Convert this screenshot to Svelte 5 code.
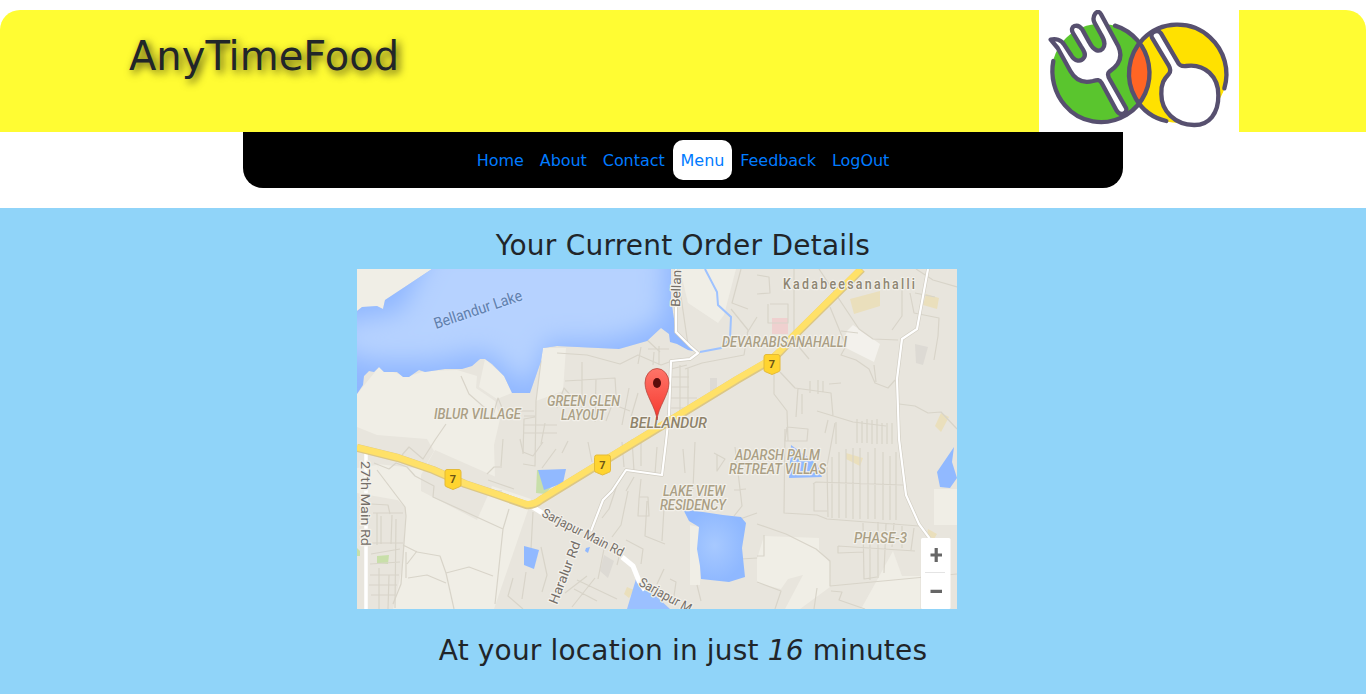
<script>
  const links = ['Home', 'About', 'Contact', 'Menu', 'Feedback', 'LogOut'];
  const active = 'Menu';
  const minutes = 16;

  const shields = [
    { x: 96, y: 210 },
    { x: 245.5, y: 195.5 },
    { x: 415, y: 95 }
  ];

  // Map captions: x, baseline, drawn width, size, rotation
  const labels = [
    { t: 'Bellandur Lake', x: 79, y: 60, w: 92, s: 15.5, r: -18.5, c: 'water' },
    { t: 'IBLUR VILLAGE', x: 77, y: 149.5, w: 87, s: 14.5, r: 0, c: 'area' },
    { t: 'GREEN GLEN', x: 190, y: 136.5, w: 73, s: 14.5, r: 0, c: 'area' },
    { t: 'LAYOUT', x: 204, y: 151, w: 45, s: 14.5, r: 0, c: 'area' },
    { t: 'BELLANDUR', x: 273, y: 159, w: 77, s: 15, r: 0, c: 'area dark' },
    { t: 'DEVARABISANAHALLI', x: 365, y: 77.5, w: 125, s: 14.5, r: 0, c: 'area' },
    { t: 'ADARSH PALM', x: 378, y: 190.5, w: 85, s: 14.5, r: 0, c: 'area' },
    { t: 'RETREAT VILLAS', x: 372, y: 204.5, w: 97, s: 14.5, r: 0, c: 'area' },
    { t: 'LAKE VIEW', x: 306, y: 227, w: 62, s: 14.5, r: 0, c: 'area' },
    { t: 'RESIDENCY', x: 303, y: 241, w: 66, s: 14.5, r: 0, c: 'area' },
    { t: 'PHASE-3', x: 497, y: 273.5, w: 53, s: 14.5, r: 0, c: 'area' },
    { t: '27th Main Rd', x: 4, y: 192, w: 85, s: 13, r: 90, c: 'street' },
    { t: 'Sarjapur Main Rd', x: 184, y: 247, w: 90, s: 13, r: 27, c: 'street' },
    { t: 'Sarjapur M', x: 281, y: 316, w: 58, s: 13, r: 29, c: 'street' },
    { t: 'Haralur Rd', x: 200, y: 336, w: 66, s: 13, r: -69, c: 'street' },
    { t: 'Bellan', x: 323, y: 38, w: 37, s: 13, r: -88, c: 'street' }
  ];
</script>

<header>
  <h1>AnyTimeFood</h1>
  <svg class="logo" viewBox="27 30 600 366" aria-label="AnyTimeFood logo">
    <rect x="27" y="30" width="600" height="366" fill="#fff" />
    <circle cx="212" cy="218" r="147" fill="#5ac52e" />
    <circle cx="443" cy="221" r="147" fill="#ffe100" />
    <path d="M327 137C286 180 287 267 327 311C370 266 372 182 327 137Z" fill="#ff6524" />
    <g fill="none" stroke="#57506f" stroke-width="13" stroke-linecap="round" stroke-linejoin="round">
      <path d="M255 77C309 94 347 140 356 192C367 254 340 313 289 345C223 384 148 367 105 316C73 279 61 228 70 183" />
      <path d="M583 265C599 211 584 152 540 112C483 59 393 62 339 117C292 165 284 240 317 295C338 332 370 354 409 363" />
      <path fill="#fff" d="M62 119C76 115 94 119 102 133L123 165C134 185 153 187 162 173C169 162 161 151 153 139L129 99C117 78 143 68 157 89L178 127C191 153 207 157 218 146C229 133 222 118 214 105L193 67C185 50 202 22 213 43L265 139C280 172 267 196 238 215C231 221 234 231 242 243L288 324C294 339 272 351 260 332L215 249C209 238 202 239 189 243C158 251 136 240 121 213L83 144Z" />
      <path fill="#fff" d="M366 113C358 99 381 85 393 100L442 184C447 196 453 199 467 198C525 189 566 231 565 286C566 340 537 376 492 375C435 374 394 334 394 282C393 251 402 237 417 221C424 213 421 205 416 196Z" />
    </g>
  </svg>
</header>

<nav>
  {#each links as link}
    <a href="#{link}" class:active={link === active}><span>{link}</span></a>
  {/each}
</nav>

<main>
  <h3>Your Current Order Details</h3>
  <svg class="map" viewBox="0 0 600 340" width="600" height="340">
    <defs>
      <radialGradient id="pond"><stop offset="0" stop-color="#a7c9ff" /><stop offset="1" stop-color="#8fb8ff" /></radialGradient>
      <linearGradient id="pin" x2="0" y2="1"><stop stop-color="#ff7468" /><stop offset="1" stop-color="#f5382e" /></linearGradient>
      <filter id="soft" x="-20%" y="-40%" width="140%" height="180%"><feGaussianBlur stdDeviation="12" /></filter>
      <clipPath id="shore"><path d="M75 0L28 31L26 40L20 37L5 38L0 42V125L6 116L7 107L12 102L17 103L22 98L27 103H40L46 108H52L62 101L68 103L88 100H105L115 97L123 90H128L135 95L147 107L155 124H173L184 92L186 79L200 77L262 80L290 72L304 59L312 65L313 73L320 75L331 81L340 83L337 80L319 63L314 30V0Z" /></clipPath>
    </defs>
    <rect width="600" height="340" fill="#e8e5dd" />

    <!-- Open land -->
    <g fill="#f0eee6">
      <path d="M0 0H75L28 31L26 40L0 42Z" />
      <path d="M0 125L22 98L50 108L68 102L100 101L120 107L119 119L138 132L143 150L137 176L138 210L120 240L68 221L63 206L77 182L70 170L20 166L0 158Z" />
      <path d="M128 90L147 107L155 124L140 130L122 118Z" />
      <path d="M185 79H209L206 122L179 132Z" />
      <path d="M323 0H379L367 46L361 54L331 34Z" />
      <path d="M20 195L67 200L120 240L172 238L137 340H36L46 295L49 239L35 225Z" />
      <path d="M68 195L138 218L174 230L163 260L136 250L67 224Z" />
      <path d="M407 267L462 269V281L473 294V318L443 340H428L446 306L431 310L424 320L400 314V290Z" />
      <path d="M0 199L20 196L46 232L0 224Z" />
      <path d="M577 220H600V256H577Z" />
      <path d="M536 282L545 307H563V340H504L519 313Z" />
      <path d="M333 256L342 258L344 280L343 316H333Z" />
    </g>
    <path d="M64 206L78 181L139 208L120 251L64 222Z" fill="#e8e5dd" />
    <path d="M496 56L523 75L517 93L485 77L490 62Z" fill="#f3f1ec" />
    <g fill="#eadfbc">
      <path d="M493 30L523 22V37L497 45Z" /><path d="M569 25L582 29L580 40L566 36Z" />
      <path d="M584 144L592 148L584 163L578 157Z" /><path d="M489 184L506 189L503 197L489 190Z" />
      <path d="M571 260L580 265L577 270L570 266Z" /><path d="M270 318L277 321L272 329L267 325Z" />
    </g>
    <path d="M415 49H431V65H415Z" fill="#efd0cf" />
    <path d="M558 75L571 78L566 96L559 94Z" fill="#dddad4" />
    <path d="M353 109H360V122H353ZM247 286L257 292L251 309L243 302Z" fill="#dddad4" />
    <g fill="#c8dfa9"><path d="M20 287L32 286L31 295L20 294Z" /><path d="M180 201L200 202V212L188 225L179 224Z" /><path d="M0 279L3 282V287H0Z" /></g>

    <!-- Lanes -->
    <g fill="none" stroke="#d8d4c9" stroke-width="1.2" stroke-linejoin="round">
      <path d="M104 107L112 125L128 139M136 146L141 129L146 141M89 155L78 171L66 190L52 178L45 186M167 147H178M177 82L184 92L179 132L178 197L166 195M177 142H155M178 148L167 150L166 185M166 156H200M166 164H200M188 154L184 175" />
      <path d="M17 194L32 200L39 194L50 198L58 207L77 217L76 228L146 260M20 201L48 238L49 247L44 315L36 335M46 276L60 283L83 287L89 304L112 298L136 307M89 304L97 340M152 240L146 260L138 335M49 283V309M51 309L70 306L89 314M60 282L50 295" />
      <path d="M14 235L31 236L33 245M16 244H46M20 244V276M24 247V275M35 246L34 275M10 274H46M14 285L43 280M13 295L43 293M13 306H42M12 316H40M14 326H38M22 299V340M32 306L31 340M39 250L38 339" />
      <path d="M200 84L230 86L263 95L281 86L304 96L315 92M208 112L258 109L259 125L249 152M225 93V140M200 139L207 119L215 128M239 110L238 153M272 119L265 156M281 124L274 148M255 135L273 142M284 78L281 95M289 70L303 83M291 80H312M297 83L296 96M302 77V96M314 100L330 96M314 108H332M314 118H332M314 129H340M314 139H332M314 148H330M323 96V152M331 99V141M320 0L331 76M384 0L375 34L391 40M374 40L391 61L387 86L345 94L328 100" />
      <path d="M400 25L413 24L412 8L400 6M413 35H431V54H411V35M437 0V72L452 90M462 0L502 60L516 70L541 71M473 38L489 77L484 86L499 91L512 100L518 114L531 119L538 111M517 96L519 113M545 12V47L535 61M553 24L557 44L582 49L581 67L577 91M559 0L576 11L600 18M558 24L578 28M484 62L501 64M400 48L390 64" />
      <path d="M417 92V125L430 142L431 172M423 103L438 119L474 124L476 147M441 119L439 148M445 125V145M453 112V124M461 111V125M466 112V123M472 115L484 114M460 142L496 153L529 157M471 151L468 164M430 158L451 160L450 172H428L430 158M479 153L479 175M542 135L558 137L571 144L584 143L600 160" />
      <path d="M478 154L470 197L471 248M500 150V174M505 152V174M510 150V174M515 151V175M520 150V175M525 154V175M530 154V175M535 154V175" />
      <path d="M428 160L427 244L460 246L470 250L562 257M456 215L459 213L546 216M457 215V242H470M475 188V249M482 183V249M489 180V249M496 179V250M503 179V250M511 183V250M518 179V250M526 183V251M533 187V251M539 183V251M506 254L507 310L520 308M513 261V311M521 253V309M529 255L527 304M537 254L535 278M545 257V279M557 259L554 281M481 277L558 282M481 277V284L507 283M400 255L429 265L459 280L473 292V317L600 305M407 266V287H400M400 313L424 322L418 340M460 319L457 340M474 322L485 323L482 331L508 340" />
      <path d="M211 172L205 184M231 173L235 193M265 173L267 198M275 170L277 202M284 172L284 197M300 178L298 205M277 208L269 222M284 210L282 230L281 247H292L291 228H282M263 207L252 240L245 249M271 222L264 256L255 268M308 223L305 272M290 232L288 267L308 275M248 275L241 310M269 271L286 280L284 295M263 284L260 296M307 300L300 315M313 310L319 313L316 334M340 316L344 332M326 180L328 204M338 173L336 220M357 184L368 190L360 202L360 186M378 178L385 237L377 247M389 220L377 221M383 250L400 244M384 290L400 289M230 307L208 324M238 309L215 338M217 320L240 332M220 311L260 330M156 309L151 327L166 340M169 303L165 330M184 278L190 306L185 323M185 199L199 180M146 170L144 197M163 170L166 183L176 187L186 173M130 205L137 198H145M131 211L157 220M132 222H145M176 243L174 280" />
    </g>

    <!-- Lake, with lighter water away from the shore -->
    <g clip-path="url(#shore)">
      <rect width="342" height="126" fill="#90b7ff" />
      <path filter="url(#soft)" fill="#b6d2ff" d="M78 -25H308L306 50L279 64L245 72H190L176 110L159 112L144 92L124 82L75 92L13 92L-20 80V54L44 42Z" />
    </g>
    <path d="M348 0L360 23L361 36L374 48L373 70L364 79L343 83" fill="none" stroke="#9ec2ff" stroke-width="2" />
    <path d="M181 201L209 200L206 214L187 221Z" fill="#91b9ff" />
    <path d="M167 277L182 281L177 300L167 296Z" fill="#91b9ff" />
    <path d="M326 240L366 246L384 248L389 254L385 279L388 308L372 313L344 310L343 297L340 280L342 258L332 252Z" fill="url(#pond)" />
    <path d="M279 310L288 317L313 340H270Z" fill="#9bc0ff" />
    <path d="M434 176L442 182L460 195L465 208L432 209Z" fill="#91b9ff" />
    <path d="M597 178L595 193L600 209L593 219L583 218L580 203Z" fill="#91b9ff" />
    <path d="M229 279L233 278L231 284L228 282Z" fill="#91b9ff" />

    <!-- Streets -->
    <g fill="none" stroke-linejoin="round">
      <g stroke="#d2cec3" stroke-width="3.5">
        <path d="M319 0V63L333 77L341 84L333 90L314 92L312 145L309 173L305 206L269 201L255 222L246 231L234 262" />
        <path d="M571 0L560 60L545 70L540 110L542 170L549 226L562 255L576 274" />
      </g>
      <g stroke="#fff" stroke-width="2.200">
        <path d="M319 0V63L333 77L341 84L333 90L314 92L312 145L309 173L305 206L269 201L255 222L246 231L234 262" />
        <path d="M571 0L560 60L545 70L540 110L542 170L549 226L562 255L576 274" />
        <path d="M9 184V340" stroke-width="3.5" />
        <path d="M174 237L190 247M265 288L276 297L282 312L288 321" stroke-width="5" />
      </g>
      <path d="M0 179L41 189L76 201L108 215L135 224L169 236Q177 237 184 231L300 160L380 111L411 93Q423 85 436 68L505 0" stroke="#dcc785" stroke-width="8" />
      <path d="M0 178.500L41 188.500L76 200.500L108 214.500L135 223.500L169 235Q177 236 184 230L300 159L380 110L411 92Q423 84 436 67L504 0" stroke="#ffe168" stroke-width="6.500" />
    </g>

    {#each labels as l}
      <text class={l.c} font-size={l.s} textLength={l.w} lengthAdjust="spacingAndGlyphs" transform="translate({l.x} {l.y}) rotate({l.r})">{l.t}</text>
    {/each}
    <text class="town" font-size="15.500" textLength="165" lengthAdjust="spacing" transform="translate(426 20) scale(0.8 1)">Kadabeesanahalli</text>

    {#each shields as s}
      <g transform="translate({s.x} {s.y})">
        <path d="M-6 -9.500H6Q8 -9.500 8 -7V6Q8 7.500 6 8L0 10.500L-6 8Q-8 7.500 -8 6V-7Q-8 -9.500 -6 -9.500Z" fill="#ffd42f" stroke="#e4ba38" />
        <text class="num" x="0" y="4" text-anchor="middle">7</text>
      </g>
    {/each}

    <path d="M300 151C299 138 288 126 288 114A12 14.500 0 0 1 312 114C312 126 301 138 300 151Z" fill="url(#pin)" stroke="#b8453b" stroke-width="0.800" />
    <ellipse cx="300" cy="114" rx="4" ry="5" fill="#5c0c0b" />

    <rect x="564" y="269" width="29.500" height="71" rx="1.500" fill="#fff" />
    <path d="M568 303.500H588" stroke="#e4e4e4" />
    <path d="M573.500 286H585M579.200 279V293M573.500 322.300H585" stroke="#666" stroke-width="3.200" fill="none" />
  </svg>
  <h3 class="eta">At your location in just <i>{minutes}</i> minutes</h3>
</main>

<style>
  :global(body) {
    margin: 0;
    background: #fff;
    color: #212529;
    font-family: Verdana, "DejaVu Sans", sans-serif;
    font-size: 16px;
    line-height: 1.5;
    overflow: hidden;
  }
  header {
    display: flex;
    justify-content: space-between;
    height: 122px;
    margin-top: 10px;
    padding: 0 127px 0 129px;
    box-sizing: border-box;
    background: #fffc33;
    border-radius: 20px 20px 0 0;
  }
  h1 {
    margin: 22px 0 0;
    font-size: 40px;
    font-weight: 400;
    line-height: 48px;
    text-shadow: 3px 3px 8px rgba(0, 0, 0, 0.75);
  }
  .logo {
    display: block;
    width: 200px;
    height: 122px;
  }
  nav {
    display: flex;
    justify-content: center;
    align-items: center;
    width: 880px;
    height: 56px;
    margin: 0 auto 20px;
    background: #000;
    border-radius: 0 0 20px 20px;
  }
  nav a {
    padding: 9px 8px 7px;
    color: #007bff;
    letter-spacing: -0.06px;
    text-decoration: none;
    border-radius: 10px;
  }
  nav a.active {
    background: #fff;
  }
  main {
    height: 486px;
    padding-top: 20px;
    box-sizing: border-box;
    background: #90d4f9;
  }
  h3 {
    margin: 0;
    height: 41px;
    padding-top: 1px;
    box-sizing: border-box;
    font-size: 28px;
    font-weight: 400;
    letter-spacing: 0.23px;
    line-height: 34px;
    text-align: center;
    white-space: nowrap;
  }
  .map {
    display: block;
    margin-left: 357px;
  }
  .eta {
    margin-top: 24px;
    letter-spacing: 0.16px;
  }
  text {
    font-family: Roboto, sans-serif;
    stroke: #f3f1eb;
    stroke-width: 2.5px;
    paint-order: stroke;
    stroke-linejoin: round;
  }
  .area {
    fill: #aa9f85;
    font-style: italic;
    font-weight: 500;
  }
  .dark {
    fill: #8e826a;
  }
  .town {
    fill: #8e8572;
    font-weight: 500;
  }
  .water {
    fill: #6080ad;
    stroke: #bcd5ff;
  }
  .street {
    fill: #746e68;
  }
  .num {
    fill: #6b5516;
    stroke: none;
    font-size: 11px;
    font-weight: 700;
  }
</style>
